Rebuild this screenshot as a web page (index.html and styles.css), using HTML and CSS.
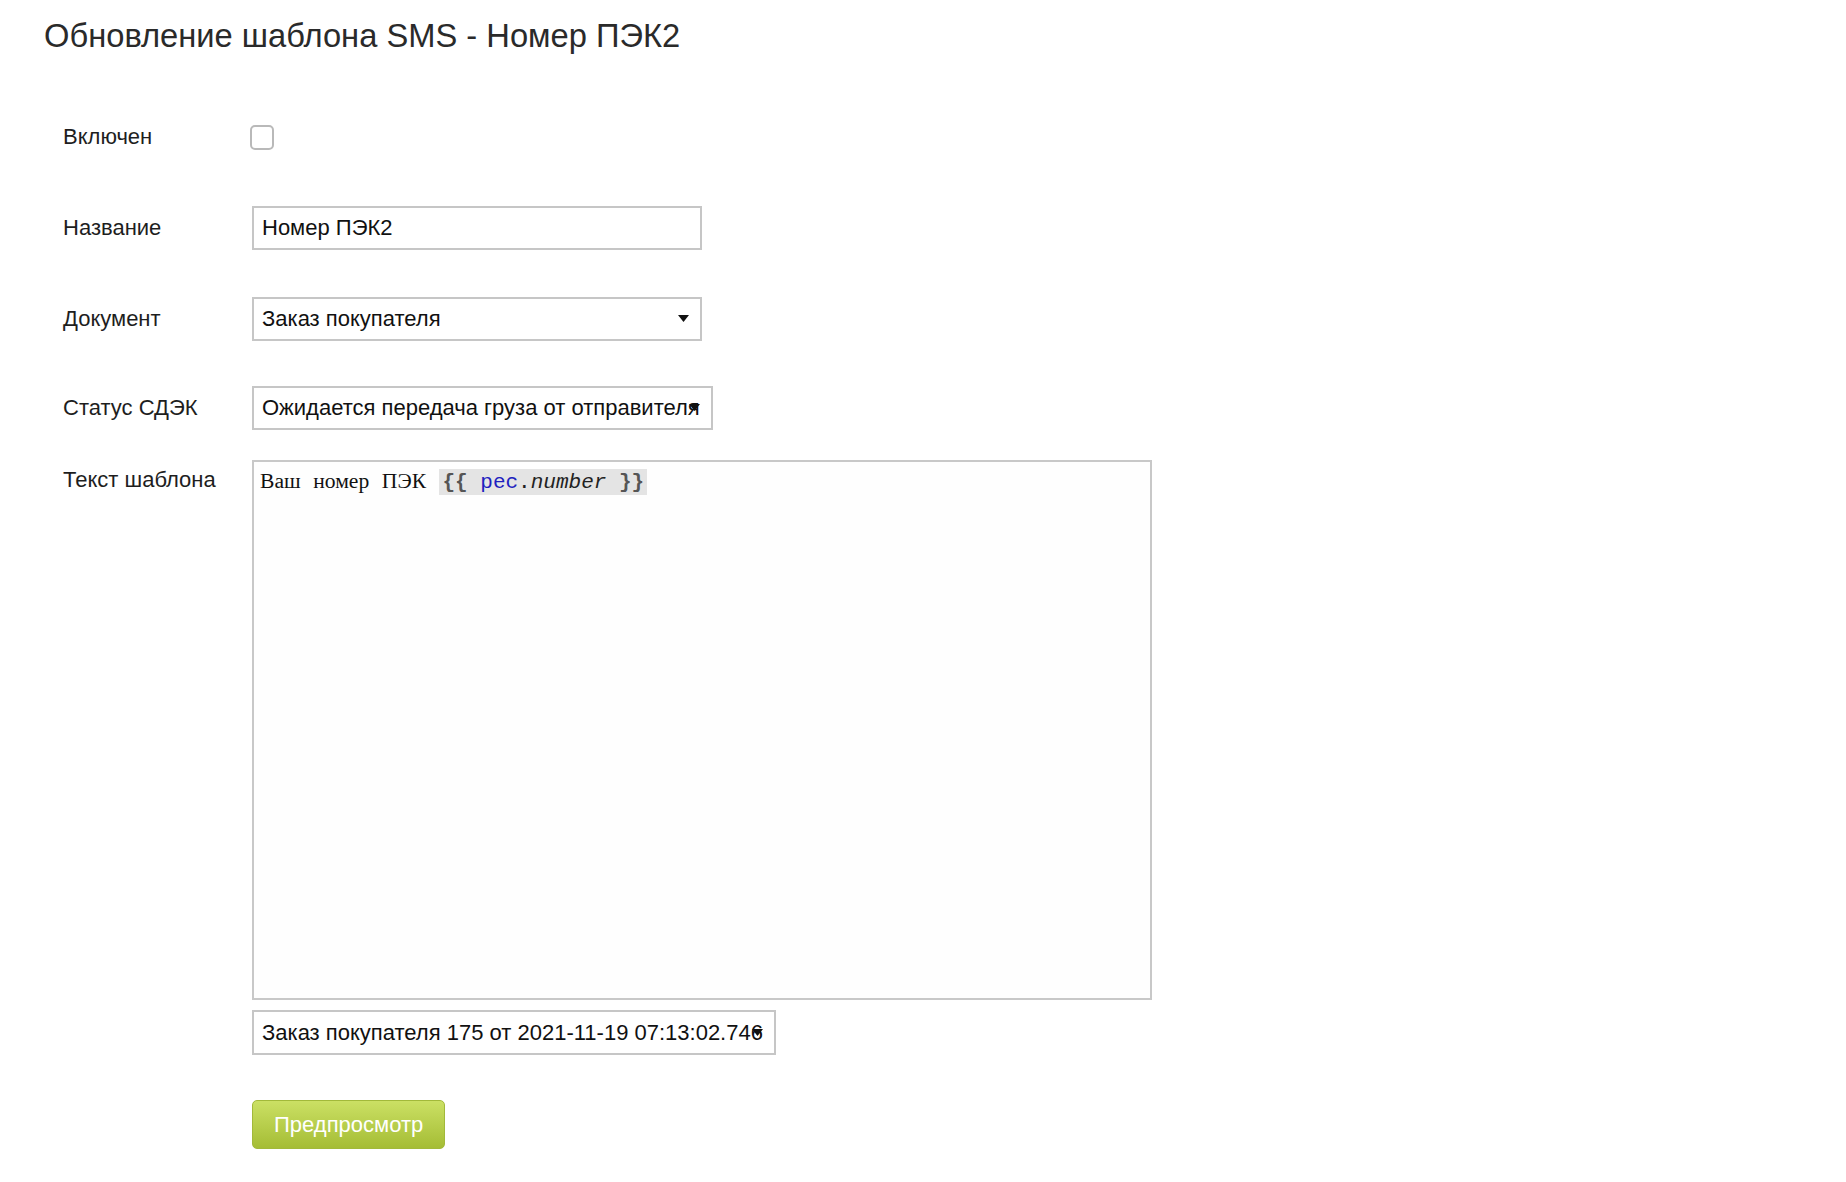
FILE: index.html
```html
<!DOCTYPE html>
<html lang="ru">
<head>
<meta charset="utf-8">
<title>Обновление шаблона SMS - Номер ПЭК2</title>
<link rel="stylesheet" href="styles.css">
</head>
<body>
<main class="page">
  <h1 class="title">Обновление шаблона SMS - Номер ПЭК2</h1>
  <form class="form">
    <div class="row row-check">
      <label class="label" for="enabled">Включен</label>
      <input class="check" type="checkbox" id="enabled">
    </div>
    <div class="row row-gap">
      <label class="label" for="name">Название</label>
      <input class="input" id="name" type="text" value="Номер ПЭК2">
    </div>
    <div class="row row-gap">
      <span class="label">Документ</span>
      <div class="select select-doc">
        <span class="select-value">Заказ покупателя</span>
        <svg class="arrow" width="11" height="7" viewBox="0 0 11 7"><path d="M0 0H11L5.5 7Z"/></svg>
      </div>
    </div>
    <div class="row row-status">
      <span class="label">Статус СДЭК</span>
      <div class="select select-status">
        <span class="select-value">Ожидается передача груза от отправителя</span>
        <svg class="arrow" width="11" height="7" viewBox="0 0 11 7"><path d="M0 0H11L5.5 7Z"/></svg>
      </div>
    </div>
    <div class="row row-top row-editor">
      <span class="label label-top">Текст шаблона</span>
      <div class="editor" contenteditable="true">
        <span class="plain">Ваш номер ПЭК</span> <span class="token"><span class="brace">{{</span> <span class="var">pec</span>.<span class="prop">number</span> <span class="brace">}}</span></span>
      </div>
    </div>
    <div class="row row-order">
      <span class="label"></span>
      <div class="select select-order">
        <span class="select-value">Заказ покупателя 175 от 2021-11-19 07:13:02.746</span>
        <svg class="arrow" width="11" height="7" viewBox="0 0 11 7"><path d="M0 0H11L5.5 7Z"/></svg>
      </div>
    </div>
    <div class="row">
      <span class="label"></span>
      <button class="btn" type="button">Предпросмотр</button>
    </div>
  </form>
</main>
</body>
</html>
```
FILE: styles.css
```css
html, body {
  margin: 0;
  padding: 0;
  background: #ffffff;
}

body {
  font-family: "Liberation Sans", Arial, Helvetica, sans-serif;
  color: #1e1e1e;
  font-size: 22px;
}

.page {
  padding: 16px 0 0 44px;
}

.title {
  margin: 0;
  font-size: 32.7px;
  font-weight: normal;
  line-height: 40px;
  color: #2a2a2a;
}

.form {
  display: flex;
  flex-direction: column;
  padding-left: 19px;
  margin-top: 59px;
}

.row {
  display: flex;
  align-items: center;
}

.row-top {
  align-items: flex-start;
}

.row-check {
  height: 44px;
}

.row-gap {
  margin-top: 47px;
}

.row-status {
  margin-top: 45px;
}

.row-editor {
  margin-top: 30px;
}

.row-order {
  margin-top: 10px;
  margin-bottom: 45px;
}

.label {
  flex: 0 0 189px;
  width: 189px;
  line-height: 26px;
  color: #1e1e1e;
}

.label-top {
  padding-top: 7px;
}

.check {
  appearance: none;
  -webkit-appearance: none;
  margin: 0 0 0 -2px;
  width: 24px;
  height: 25px;
  border: 2px solid #b9b9b9;
  border-radius: 5px;
  background: #fff;
  box-sizing: border-box;
}

.input {
  box-sizing: border-box;
  width: 450px;
  height: 44px;
  margin: 0;
  border: 2px solid #c6c6c6;
  border-radius: 0;
  padding: 0 8px;
  font-family: "Liberation Sans", Arial, sans-serif;
  font-size: 22px;
  color: #111;
  background: #fff;
  outline: none;
}

.select {
  position: relative;
  box-sizing: border-box;
  height: 44px;
  border: 2px solid #c6c6c6;
  padding: 0 8px;
  display: flex;
  align-items: center;
  overflow: hidden;
  white-space: nowrap;
  background: #fff;
  color: #111;
}

.select-doc {
  width: 450px;
}

.select-status {
  width: 461px;
}

.select-order {
  width: 524px;
  height: 45px;
}

.arrow {
  position: absolute;
  right: 11px;
  top: 50%;
  margin-top: -4px;
  fill: #111;
}

.editor {
  box-sizing: border-box;
  width: 900px;
  height: 540px;
  border: 2px solid #c8c8c8;
  background: #fefefe;
  padding: 5px 6px;
  font-family: "Liberation Serif", "Times New Roman", serif;
  font-size: 21.6px;
  line-height: 28px;
  color: #111;
  outline: none;
}

.plain {
  word-spacing: 7.2px;
}

.token {
  margin-left: 8px;
  padding: 2px 3px 1px;
  background: #e4e4e4;
  font-family: "Liberation Mono", "Courier New", monospace;
  font-size: 21px;
  color: #222;
}

.brace {
  color: #555;
  font-weight: bold;
}

.var {
  color: #1f1fbf;
}

.prop {
  font-style: italic;
  color: #222;
}

.btn {
  box-sizing: border-box;
  height: 49px;
  padding: 0 21px;
  margin: 0;
  border: 1px solid #a2b93a;
  border-radius: 5px;
  background: linear-gradient(to bottom, #cbe064 0%, #a5bd35 100%);
  color: #ffffff;
  font-family: "Liberation Sans", Arial, sans-serif;
  font-size: 22px;
  cursor: pointer;
}
```
